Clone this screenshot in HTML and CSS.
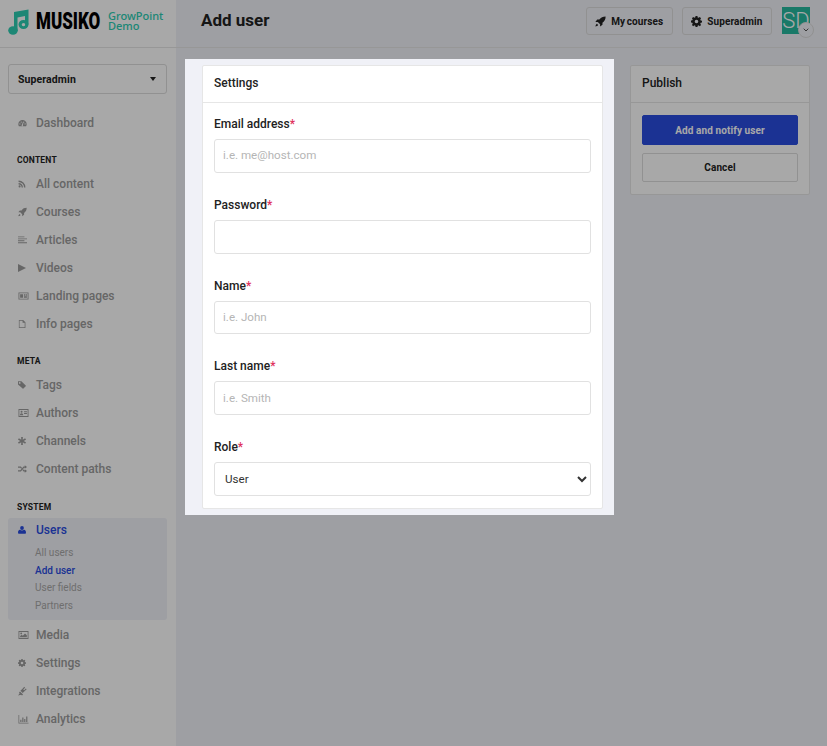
FILE: index.html
```html
<!DOCTYPE html>
<html>

<head>
    <meta charset="UTF-8">
    <title>Add user</title>
    <link rel="stylesheet" href="styles.css">
</head>

<body>
    <div class="shell">
        <aside class="sidebar">
            <div class="logo">
                <svg class="logo-note" width="21" height="26" viewBox="0 0 21 26">
                    <path d="M6 3 20.500.5v15H17V7L9.500 8.500V22H6z" />
                    <ellipse cx="5" cy="21.500" rx="4.800" ry="4.200" />
                    <path fill-rule="evenodd" d="M15.500 11a5 4.500 0 1 0 0 9 5 4.500 0 0 0 0-9zm0 3a1.800 1.600 0 1 1 0 3.200 1.800 1.600 0 0 1 0-3.200z" />
                </svg>
                <span class="logo-name">MUSIKO</span>
                <span class="logo-sub">GrowPoint<br>Demo</span>
            </div>

            <nav class="nav">
                <div class="role-select">
                    <span>Superadmin</span>
                    <i class="caret"></i>
                </div>

                <a class="nav-item">
                    <svg class="icon" viewBox="0 0 14 14"><path d="M7 2.500a6.500 6.500 0 0 0-6.500 6.500c0 1.200.3 2.200.9 3h11.200c.6-.8.900-1.800.9-3A6.500 6.500 0 0 0 7 2.500zM3 9.500a1 1 0 1 1 0-2 1 1 0 0 1 0 2zm2-3a1 1 0 1 1 0-2 1 1 0 0 1 0 2zm2.800 3.600a1.200 1.200 0 1 1-1.500-.6L7.500 6h1zM11 9.500a1 1 0 1 1 0-2 1 1 0 0 1 0 2zM9 6.500a1 1 0 1 1 0-2 1 1 0 0 1 0 2z" /></svg>
                    Dashboard
                </a>

                <h4 class="nav-title">CONTENT</h4>
                <a class="nav-item">
                    <svg class="icon icon-small" viewBox="0 0 14 14"><circle cx="2.800" cy="11.200" r="1.800" /><path d="M1 5.300v2.400a5.300 5.300 0 0 1 5.300 5.300h2.400A7.700 7.700 0 0 0 1 5.300zM1 1v2.400a9.600 9.600 0 0 1 9.600 9.600H13A12 12 0 0 0 1 1z" /></svg>
                    All content
                </a>
                <a class="nav-item">
                    <svg class="icon" viewBox="0 0 14 14"><path d="M13.500.5c-3.500 0-6 1.200-8 4H2.800L.5 7.500h3l3 3v3l3-2.300V8.500c2.800-2 4-4.500 4-8zM2.500 10C1.200 10.800.8 12 .5 13.500c1.500-.3 2.700-.7 3.500-2z" /></svg>
                    Courses
                </a>
                <a class="nav-item">
                    <svg class="icon" viewBox="0 0 14 14"><path d="M0 1.500h10v1.400H0zM0 4.500h14v1.400H0zM0 7.500h10v1.400H0zM0 10.500h14v1.400H0z" /></svg>
                    Articles
                </a>
                <a class="nav-item">
                    <svg class="icon icon-small" viewBox="0 0 14 14"><path d="M0 0v14l14-7z" /></svg>
                    Videos
                </a>
                <a class="nav-item">
                    <svg class="icon icon-wide" viewBox="0 0 14 14"><path fill-rule="evenodd" d="M0 2h14v10H0zM1.200 3.200v7.600h11.600V3.200zM2.300 4.500h4v5h-4zM7.500 4.500h1.800v2H7.500zM10 4.500h1.800v2H10zM7.500 7.500h4.300v2H7.500z" /></svg>
                    Landing pages
                </a>
                <a class="nav-item">
                    <svg class="icon icon-small" viewBox="0 0 14 14"><path fill-rule="evenodd" d="M1.500 0H9l4 4v10H1.500zM2.700 1.200v11.600h9V5H8V1.200z" /></svg>
                    Info pages
                </a>

                <h4 class="nav-title">META</h4>
                <a class="nav-item">
                    <svg class="icon icon-small" viewBox="0 0 14 14"><path d="M0 .5h6l7.500 7.300a1 1 0 0 1 0 1.400l-4 4a1 1 0 0 1-1.400 0L0 6zM3 4.800a1.500 1.500 0 1 0 0-3 1.500 1.500 0 0 0 0 3z" /></svg>
                    Tags
                </a>
                <a class="nav-item">
                    <svg class="icon icon-wide" viewBox="0 0 14 14"><path fill-rule="evenodd" d="M0 1.500h14v11H0zM1.200 2.700v8.600h11.600V2.700zM4.300 3.800a1.400 1.400 0 1 1 0 2.800 1.400 1.400 0 0 1 0-2.800zM2 10c0-1.700.8-2.800 2.300-2.800s2.300 1.100 2.300 2.800zM7.800 4.500h4v1.300h-4zM7.800 7h4v1.300h-4z" /></svg>
                    Authors
                </a>
                <a class="nav-item">
                    <svg class="icon icon-small" viewBox="0 0 14 14"><path d="M5.500 0h3l-.2 4.800 4.200-2.500 1.500 2.600L9.800 7l4.200 2.100-1.500 2.600-4.200-2.500.2 4.800h-3l.2-4.800-4.200 2.500L0 9.100 4.200 7 0 4.900l1.500-2.600 4.200 2.500z" /></svg>
                    Channels
                </a>
                <a class="nav-item">
                    <svg class="icon" viewBox="0 0 14 14"><path d="M10.500 1 14 3.800l-3.500 2.800V5H9.500l-5 5.800H0V9h3.600l5-5.800h1.900zM0 3.200h4.500L6.300 5.300 5.100 6.700 3.600 5H0zM10.500 7.400l3.500 2.800-3.500 2.800v-2.200H8.600L6.900 8.700l1.200-1.400L9.500 9h1z" /></svg>
                    Content paths
                </a>

                <h4 class="nav-title nav-title-system">SYSTEM</h4>
                <div class="nav-group">
                    <a class="nav-item nav-item-active">
                        <svg class="icon icon-small" viewBox="0 0 14 14"><circle cx="7" cy="3.500" r="3.300" /><path d="M1.500 13.500c-1 0-1.500-.5-1.500-1.500 0-3 1-5 3.500-5.300.9.700 2.100 1.100 3.500 1.100s2.600-.4 3.500-1.100C13 7 14 9 14 12c0 1-.5 1.500-1.500 1.500z" /></svg>
                        Users
                    </a>
                    <a class="sub-item">All users</a>
                    <a class="sub-item sub-item-active">Add user</a>
                    <a class="sub-item">User fields</a>
                    <a class="sub-item">Partners</a>
                </div>

                <a class="nav-item">
                    <svg class="icon icon-wide" viewBox="0 0 14 14"><path fill-rule="evenodd" d="M0 1.500h14v11H0zM1.200 2.700v8.600h11.600V2.700zM2.300 10.200V8.500l2.200-2 1.600 1.500 3-3.200 2.600 2.700v2.700zM3.800 3.500a1.300 1.300 0 1 1 0 2.600 1.300 1.300 0 0 1 0-2.600z" /></svg>
                    Media
                </a>
                <a class="nav-item">
                    <svg class="icon icon-small" viewBox="0 0 14 14"><path fill-rule="evenodd" d="M5.800 0h2.400l.3 1.800 1.200.5 1.500-1 1.600 1.600-1 1.500.5 1.200 1.700.3v2.400l-1.700.3-.5 1.200 1 1.500-1.600 1.600-1.500-1-1.200.5-.3 1.700H5.800l-.3-1.700-1.200-.5-1.500 1-1.600-1.600 1-1.500-.5-1.200L0 8.200V5.800l1.700-.3.5-1.200-1-1.500 1.600-1.600 1.500 1 1.200-.5zM7 4.700a2.300 2.300 0 1 0 0 4.600 2.300 2.300 0 0 0 0-4.600z" /></svg>
                    Settings
                </a>
                <a class="nav-item">
                    <svg class="icon" viewBox="0 0 14 14"><path d="M0 14l2.500-3.200-.9-1.600 1.500-1.500 4.700 4.700-1.500 1.500-1.600-.9zM3.800 6.700 7 3.500l2.700-3 1.300 1.300-2.800 2.700 1.300 1.300L12.200 3l1.300 1.300-3 2.700-3.200 3.200z" /></svg>
                    Integrations
                </a>
                <a class="nav-item">
                    <svg class="icon icon-wide" viewBox="0 0 14 14"><path d="M0 1.500h1v10.700h13v1H0zM2.500 8h1.600v3.200H2.500zM5.300 5h1.600v6.200H5.300zM8 7h1.600v4.200H8zM10.800 3.500h1.600v7.700h-1.600z" /></svg>
                    Analytics
                </a>
            </nav>
        </aside>

        <div class="content">
            <header class="topbar">
                <h1 class="page-title">Add user</h1>
                <div class="topbar-actions">
                    <a class="top-button">
                        <svg class="top-icon" viewBox="0 0 14 14"><path d="M13.500.5c-3.500 0-6 1.200-8 4H2.800L.5 7.500h3l3 3v3l3-2.300V8.500c2.800-2 4-4.500 4-8zM2.500 10C1.200 10.800.8 12 .5 13.500c1.500-.3 2.700-.7 3.500-2z" /></svg>
                        My courses
                    </a>
                    <a class="top-button">
                        <svg class="top-icon" viewBox="0 0 14 14"><path fill-rule="evenodd" d="M5.800 0h2.400l.3 1.800 1.200.5 1.500-1 1.600 1.600-1 1.500.5 1.200 1.700.3v2.400l-1.700.3-.5 1.200 1 1.500-1.600 1.600-1.500-1-1.200.5-.3 1.700H5.800l-.3-1.700-1.200-.5-1.500 1-1.600-1.600 1-1.500-.5-1.200L0 8.200V5.800l1.700-.3.5-1.200-1-1.500 1.600-1.600 1.500 1 1.200-.5zM7 4.700a2.300 2.300 0 1 0 0 4.600 2.300 2.300 0 0 0 0-4.600z" /></svg>
                        Superadmin
                    </a>
                    <div class="avatar">
                        SD
                        <span class="avatar-toggle">
                            <svg width="6" height="4" viewBox="0 0 6 4"><path d="M.7.7 3 3 5.300.7" fill="none" stroke="#555" stroke-width="1" /></svg>
                        </span>
                    </div>
                </div>
            </header>

            <main class="page">
                <div class="spotlight">
                    <section class="card">
                        <div class="card-header">Settings</div>
                        <form class="card-body settings-form">
                            <div class="field">
                                <label>Email address<span class="required">*</span></label>
                                <input class="input" type="text" placeholder="i.e. me@host.com">
                            </div>
                            <div class="field">
                                <label>Password<span class="required">*</span></label>
                                <input class="input" type="password">
                            </div>
                            <div class="field">
                                <label>Name<span class="required">*</span></label>
                                <input class="input" type="text" placeholder="i.e. John">
                            </div>
                            <div class="field">
                                <label>Last name<span class="required">*</span></label>
                                <input class="input" type="text" placeholder="i.e. Smith">
                            </div>
                            <div class="field">
                                <label>Role<span class="required">*</span></label>
                                <select class="input select">
                                    <option>User</option>
                                </select>
                            </div>
                        </form>
                    </section>
                </div>

                <section class="card publish">
                    <div class="card-header">Publish</div>
                    <div class="card-body publish-body">
                        <button class="button button-primary">Add and notify user</button>
                        <button class="button">Cancel</button>
                    </div>
                </section>
            </main>
        </div>
    </div>
</body>

</html>
```

FILE: styles.css
```css
* {
    box-sizing: border-box;
}

body {
    margin: 0;
    background-color: #f0f1f7;
    color: #222;
    font-family: Roboto, sans-serif;
    font-size: 13px;
}

.shell {
    display: grid;
    grid-template-columns: 176px 1fr;
    height: 746px;
    overflow: hidden;
}

/* sidebar */
.sidebar {
    background-color: #fff;
}

.logo {
    display: flex;
    align-items: center;
    height: 48px;
    padding-left: 8px;
    border-bottom: 1px solid #e6e6e6;
}

.logo-note {
    flex: none;
    margin-top: -3px;
    fill: #2ccdb2;
}

.logo-name {
    flex: none;
    width: 66px;
    margin: -5px 6px 0 7px;
    color: #000;
    font-size: 17px;
    font-weight: 900;
    line-height: 20px;
    transform: scaleY(1.4);
}

.logo-sub {
    margin-top: -5px;
    color: #2ccdb2;
    font-family: "Noto Sans", sans-serif;
    font-size: 11px;
    font-weight: 500;
    line-height: 10.500px;
    white-space: nowrap;
}

.nav {
    padding: 16px 9px 0 8px;
}

.role-select {
    display: flex;
    align-items: center;
    justify-content: space-between;
    height: 30px;
    padding: 0 10px 0 9px;
    border: 1px solid #dcdcdc;
    border-radius: 3px;
    font-size: 10.500px;
    font-weight: 700;
    letter-spacing: 0.1px;
}

.caret {
    width: 0;
    height: 0;
    border-left: 3.500px solid transparent;
    border-right: 3.500px solid transparent;
    border-top: 4px solid #222;
}

.nav-item {
    display: flex;
    align-items: center;
    gap: 9px;
    height: 28px;
    padding: 0 0 1px 10px;
    color: #9b9b9b;
    font-size: 12px;
    font-weight: 500;
}

.role-select + .nav-item {
    margin-top: 15px;
}

.icon {
    flex: none;
    width: 9px;
    height: 10px;
    fill: #9b9b9b;
}

.icon-small {
    width: 8px;
    margin-right: 1px;
}

.icon-wide {
    width: 11px;
    margin-right: -2px;
}

.nav-title {
    height: 33px;
    margin: 0;
    padding: 18px 0 0 9px;
    color: #222;
    font-size: 8.500px;
    font-weight: 700;
    letter-spacing: 0.2px;
    line-height: 10px;
}

.nav-title-system {
    height: 35px;
    padding-top: 19px;
}

.nav-group {
    height: 102px;
    margin-bottom: 1px;
    background-color: #f0f1f7;
    border-radius: 3px;
}

.nav-group .nav-item {
    height: 24px;
}

.nav-item-active {
    color: #2a4de0;
}

.nav-item-active .icon {
    fill: #2a4de0;
}

.sub-item {
    display: block;
    height: 17.700px;
    padding-left: 27px;
    color: #a8a8a8;
    font-size: 10px;
    line-height: 18px;
}

.nav-item-active + .sub-item {
    margin-top: 2px;
}

.sub-item-active {
    color: #2a4de0;
    font-weight: 500;
}

/* top bar */
.topbar {
    display: flex;
    align-items: center;
    justify-content: space-between;
    height: 48px;
    padding: 0 17px 0 25px;
    border-bottom: 1px solid #e6e6e6;
}

.page-title {
    margin: 0 0 7px;
    font-size: 17px;
    font-weight: 700;
}

.topbar-actions {
    display: flex;
    gap: 9px;
    margin-bottom: 5px;
}

.top-button {
    display: flex;
    align-items: center;
    gap: 5px;
    height: 28px;
    padding: 0 8.500px;
    border: 1px solid #dcdcdc;
    border-radius: 3px;
    font-size: 10px;
    font-weight: 700;
    letter-spacing: 0.1px;
    word-spacing: -1px;
}

.top-icon {
    width: 11px;
    height: 11px;
    fill: #222;
}

.avatar {
    position: relative;
    width: 28px;
    height: 27px;
    margin-left: 1px;
    background-color: #27b89f;
    color: #fff;
    font-size: 22px;
    font-weight: 300;
    line-height: 27px;
    text-align: center;
}

.avatar-toggle {
    position: absolute;
    right: -4px;
    bottom: -4px;
    display: flex;
    align-items: center;
    justify-content: center;
    width: 16px;
    height: 16px;
    background-color: #f0f1f7;
    border: 1px solid #dcdcdc;
    border-radius: 50%;
}

/* page */
.page {
    display: flex;
    align-items: flex-start;
    gap: 16px;
    padding: 11px 17px 0 9px;
}

.spotlight {
    position: relative;
    z-index: 5;
    width: 429px;
    padding: 6px 11px 6px 17px;
    background-color: #f0f1f7;
    box-shadow: 0 0 0 1500px rgba(0, 0, 0, 0.34);
}

.card {
    background-color: #fff;
    border: 1px solid #e6e6e6;
    border-radius: 2px;
}

.card-header {
    height: 37px;
    padding-left: 11px;
    border-bottom: 1px solid #e6e6e6;
    font-size: 12px;
    font-weight: 500;
    line-height: 34px;
}

.card-body {
    padding: 12px 11px;
}

.settings-form {
    display: flex;
    flex-direction: column;
    gap: 23px;
}

.field label {
    display: block;
    height: 24px;
    font-size: 12px;
    font-weight: 500;
    line-height: 18px;
}

.required {
    color: #e0315c;
}

.input {
    display: block;
    width: 100%;
    height: 33.750px;
    padding: 0 8px 1px;
    background-color: #fff;
    border: 1px solid #e1e1e1;
    border-radius: 3px;
    color: #333;
    font-family: Roboto, sans-serif;
    font-size: 11.600px;
}

.select {
    padding: 0 6px;
}

.input::placeholder {
    color: #b5b5b5;
}

.publish {
    width: 180px;
    margin-top: 6px;
}

.publish-body {
    display: flex;
    flex-direction: column;
    gap: 8px;
}

.button {
    height: 29px;
    background-color: #fff;
    border: 1px solid #dcdcdc;
    border-radius: 2px;
    color: #222;
    font-family: Roboto, sans-serif;
    font-size: 10px;
    font-weight: 700;
    letter-spacing: 0.1px;
}

.button-primary {
    height: 30px;
    background-color: #2a4de0;
    border-color: #2a4de0;
    color: #fff;
}
```
